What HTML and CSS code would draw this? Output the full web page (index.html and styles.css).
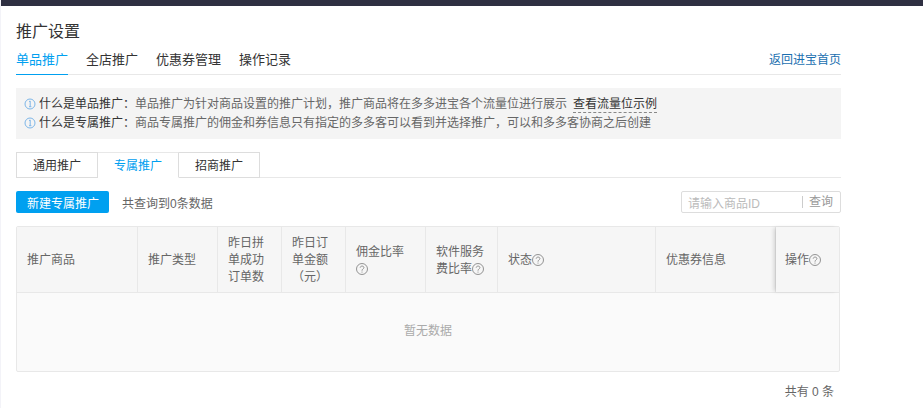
FILE: index.html
```html
<!DOCTYPE html>
<html lang="zh">
<head>
<meta charset="utf-8">
<title>推广设置</title>
<link rel="stylesheet" href="styles.css">
</head>
<body>
<div class="topbar"></div>
<main class="page">
  <h1 class="title">推广设置</h1>
  <div class="nav">
    <a class="nav-item active">单品推广</a>
    <a class="nav-item">全店推广</a>
    <a class="nav-item">优惠券管理</a>
    <a class="nav-item">操作记录</a>
    <a class="nav-back">返回进宝首页</a>
  </div>
  <div class="notice">
    <p class="notice-line"><svg class="info" viewBox="0 0 12 12"><circle cx="6" cy="6" r="5"/><path d="M5 3.6 6.2 3v5.6M5 8.7h2.4"/></svg><b>什么是单品推广：</b>单品推广为针对商品设置的推广计划，推广商品将在多多进宝各个流量位进行展示<a class="example">查看流量位示例</a></p>
    <p class="notice-line"><svg class="info" viewBox="0 0 12 12"><circle cx="6" cy="6" r="5"/><path d="M5 3.6 6.2 3v5.6M5 8.7h2.4"/></svg><b>什么是专属推广：</b>商品专属推广的佣金和券信息只有指定的多多客可以看到并选择推广，可以和多多客协商之后创建</p>
  </div>
  <div class="subtabs">
    <a class="subtab">通用推广</a>
    <a class="subtab current">专属推广</a>
    <a class="subtab">招商推广</a>
  </div>
  <div class="toolbar">
    <button class="primary">新建专属推广</button>
    <span class="count">共查询到0条数据</span>
    <div class="search">
      <span class="placeholder">请输入商品ID</span>
      <span class="search-btn">查询</span>
    </div>
  </div>
  <div class="table">
    <div class="thead">
      <div class="th"><div>推广商品</div></div>
      <div class="th"><div>推广类型</div></div>
      <div class="th"><div>昨日拼单成功订单数</div></div>
      <div class="th"><div>昨日订单金额（元）</div></div>
      <div class="th"><div>佣金比率<svg class="help" viewBox="0 0 12 12"><circle cx="6" cy="6" r="5.5"/><path d="M4.2 4.7C4.3 2.5 8 2.6 7.9 4.7 7.8 5.9 6 6 6 7.7M6 8.6v1"/></svg></div></div>
      <div class="th"><div>软件服务费比率<svg class="help" viewBox="0 0 12 12"><circle cx="6" cy="6" r="5.5"/><path d="M4.2 4.7C4.3 2.5 8 2.6 7.9 4.7 7.8 5.9 6 6 6 7.7M6 8.6v1"/></svg></div></div>
      <div class="th"><div>状态<svg class="help" viewBox="0 0 12 12"><circle cx="6" cy="6" r="5.5"/><path d="M4.2 4.7C4.3 2.5 8 2.6 7.9 4.7 7.8 5.9 6 6 6 7.7M6 8.6v1"/></svg></div></div>
      <div class="th"><div>优惠券信息</div></div>
      <div class="th fixed"><div>操作<svg class="help" viewBox="0 0 12 12"><circle cx="6" cy="6" r="5.5"/><path d="M4.2 4.7C4.3 2.5 8 2.6 7.9 4.7 7.8 5.9 6 6 6 7.7M6 8.6v1"/></svg></div></div>
    </div>
    <div class="empty">暂无数据</div>
  </div>
  <div class="total">共有 0 条</div>
</main>
</body>
</html>
```

FILE: styles.css
```css
* { box-sizing: border-box; }
html, body { margin: 0; padding: 0; height: 100%; overflow: hidden; background: #fff; }
body {
  font-family: "Liberation Sans", "Noto Sans CJK SC", sans-serif;
  font-size: 12px;
  color: #333;
  border-left: 1px solid #f3f3f8;
}
.topbar { height: 6px; background: #2f3042; margin-left: -1px; }
.page { width: 840px; padding-left: 15px; }
.title { margin: 0; padding-top: 15px; height: 37px; font-size: 16px; line-height: 22px; font-weight: 400; color: #333; }
.nav { display: flex; height: 32px; border-bottom: 1px solid #e8e8e8; font-size: 13px; line-height: 16px; padding-top: 9px; }
.nav-item { margin-right: 18px; height: 22px; color: #333; }
.nav-item.active { color: #00a0f0; border-bottom: 1px solid #00a0f0; height: 23px; }
.nav-back { margin-left: auto; color: #1a6fb0; font-size: 12px; }
.notice { margin-top: 13px; height: 51px; background: #f4f4f4; padding: 7px 8px; color: #666; display: flex; flex-direction: column; gap: 1px; }
.notice-line { margin: 0; height: 18px; line-height: 18px; display: flex; align-items: center; white-space: nowrap; }
.notice-line b { font-weight: 400; color: #333; margin-left: 3px; }
.info { width: 12px; height: 12px; fill: none; stroke: #7db6e8; stroke-width: 1; flex: none; }
.example { margin-left: 6px; color: #333; border-bottom: 1px dashed #888; line-height: 18px; height: 18px; }
.subtabs { display: flex; margin-top: 13px; height: 26px; border-bottom: 1px solid #e8e8e8; }
.subtab { width: 81px; height: 26px; line-height: 26px; text-align: center; border: 1px solid #ddd; border-left-width: 0; color: #333; background: #fff; }
.subtab:first-child { border-left-width: 1px; width: 82px; }
.subtab.current { color: #00a0f0; border-bottom-color: #fff; border-top-color: #e8e8e8; }
.toolbar { display: flex; align-items: center; margin-top: 13px; height: 22px; }
.primary { width: 93px; height: 22px; padding: 0 0 0 1px; border: 0; border-radius: 2px; background: #00a0f0; color: #fff; font: inherit; }
.count { margin-left: 13px; color: #666; }
.search { margin-left: auto; width: 160px; height: 22px; border: 1px solid #ddd; border-radius: 2px; display: flex; align-items: center; padding: 0 7px 0 6px; color: #aaa; }
.placeholder { flex: 1; color: #bbb; }
.search-btn { border-left: 1px solid #ccc; padding-left: 6px; line-height: 12px; color: #999; }
.table { margin-top: 13px; width: 824px; border: 1px solid #e8e8e8; border-radius: 2px; background: #fafafa; }
.thead { display: grid; grid-template-columns: 121px 80px 64px 64px 80px 72px 158px 120px 1fr; height: 66px; background: #f6f6f6; border-bottom: 1px solid #e8e8e8; }
.th { padding: 2px 10px 0; border-right: 1px solid #e8e8e8; line-height: 17px; color: #666; display: flex; align-items: center; }
.th:last-child { border-right: 0; }
.th.fixed { padding-left: 9px; box-shadow: -3px 0 4px -1px rgba(0,0,0,.15); }
.help { width: 12px; height: 12px; fill: none; stroke: #888; stroke-width: .9; vertical-align: -2px; }
.empty { height: 78px; padding-bottom: 6px; display: flex; align-items: center; justify-content: center; color: #aaa; }
.total { width: 824px; margin-top: 12px; padding-right: 6px; text-align: right; color: #666; line-height: 16px; }
```
